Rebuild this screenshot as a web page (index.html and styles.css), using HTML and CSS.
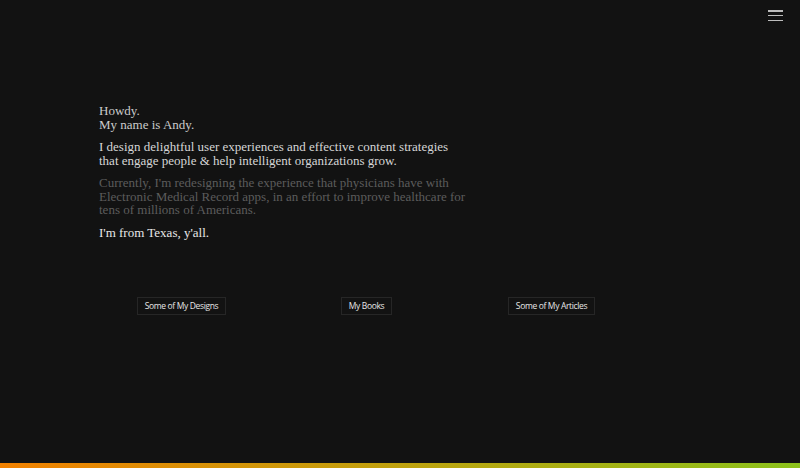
FILE: index.html
```html
<!DOCTYPE html>
<html>
<head>
<meta charset="utf-8">
<link rel="stylesheet" href="styles.css">
</head>
<body>
<div class="page">
  <header class="topbar">
    <button class="menu" aria-label="Menu">
      <span></span><span></span><span></span>
    </button>
  </header>
  <main class="intro">
    <p class="hello">Howdy.<br>My name is Andy.</p>
    <p class="lead">I design delightful user experiences and effective content strategies that engage people &amp; help intelligent organizations grow.</p>
    <p class="muted">Currently, I'm redesigning the experience that physicians have with Electronic Medical Record apps, in an effort to improve healthcare for tens of millions of Americans.</p>
    <p class="bright">I'm from Texas, y'all.</p>
  </main>
  <nav class="links">
    <div class="col"><a class="btn" href="#">Some of My Designs</a></div>
    <div class="col"><a class="btn" href="#">My Books</a></div>
    <div class="col"><a class="btn" href="#">Some of My Articles</a></div>
  </nav>
  <div class="spacer"></div>
  <div class="bar"></div>
</div>
</body>
</html>
```
FILE: styles.css
```css
html, body {
  margin: 0;
  padding: 0;
  height: 100%;
  background: #121212;
}
.page {
  height: 468px;
  display: flex;
  flex-direction: column;
  background: #121212;
}
.topbar {
  display: flex;
  justify-content: flex-end;
  padding: 10px 17px 0 0;
  height: 14px;
}
.menu {
  width: 15px;
  height: 11px;
  padding: 0;
  margin: 0;
  border: 0;
  background: none;
  display: flex;
  flex-direction: column;
  justify-content: space-between;
}
.menu span {
  display: block;
  height: 1.5px;
  background: #bdbdbd;
}
.intro {
  margin: 80px 0 0 99px;
  width: 368px;
  font-family: "Liberation Serif", "Times New Roman", serif;
  font-size: 13px;
  line-height: 13.5px;
}
.intro p {
  margin: 0 0 9px 0;
}
.hello { color: #cbcbcb; }
.lead { color: #d6d6d6; }
.muted { color: #5c5c5c; }
.bright { color: #e8e8e8; }
.links {
  display: flex;
  margin: 49px 0 0 89px;
}
.col {
  width: 185px;
  display: flex;
  justify-content: center;
}
.btn {
  display: inline-block;
  border: 1px solid #262626;
  padding: 3px 7px;
  height: 10px;
  line-height: 10px;
  color: #e6e6e6;
  text-decoration: none;
  font-family: "Open Sans", "Liberation Sans", sans-serif;
  font-size: 8.5px;
  letter-spacing: -0.35px;
}
.spacer { flex: 1; }
.bar {
  height: 5px;
  background: linear-gradient(to right, #f28100, #8cc21c);
}
```
